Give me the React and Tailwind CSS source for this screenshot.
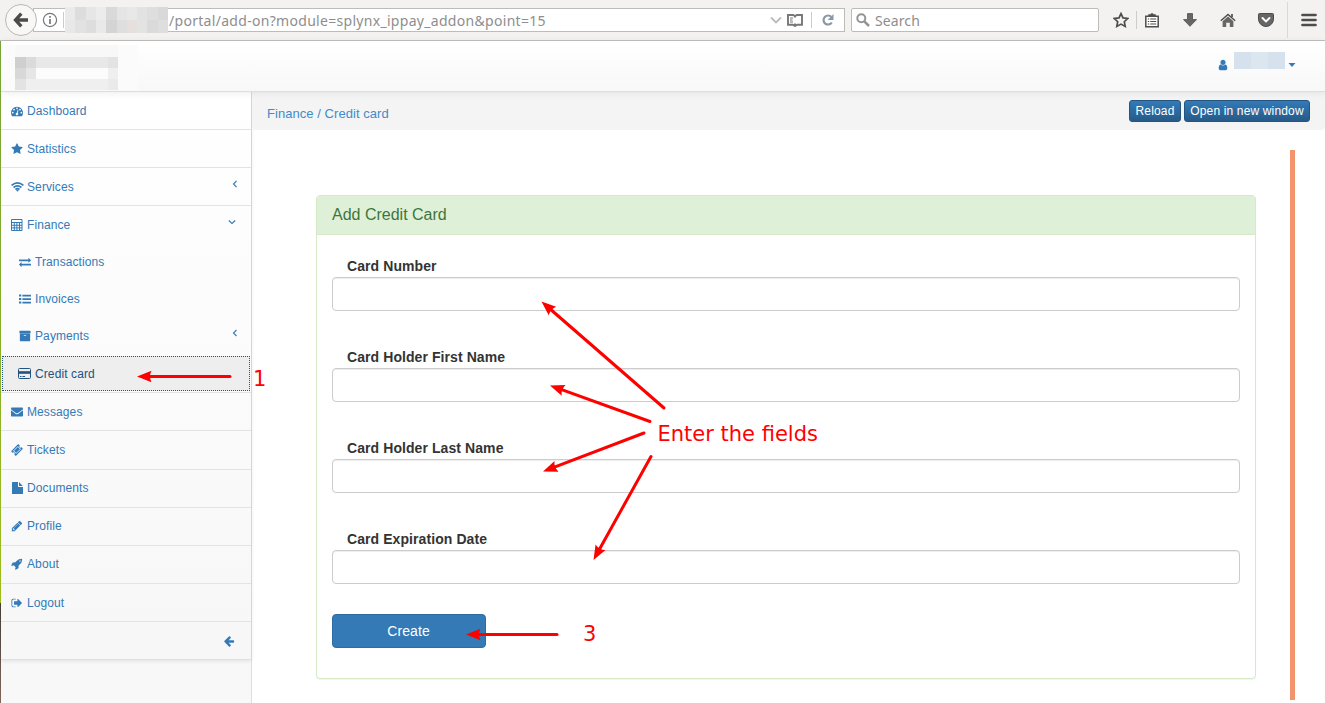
import React from "react";
import { FaEnvelope } from "react-icons/fa";

const Glyph = ({ d, className }) => (
  <svg viewBox="0 0 1792 1792" fill="currentColor" className={className}><path d={d} /></svg>
);

const STAR = "M1728 647q0 22-26 48l-363 354 86 500q1 7 1 20 0 21-10.5 35.5t-30.5 14.5q-19 0-40-12l-449-236-449 236q-22 12-40 12-21 0-31.5-14.5t-10.5-35.5q0-6 2-20l86-500-364-354q-25-27-25-48 0-37 56-46l502-73 225-455q19-41 49-41t49 41l225 455 502 73q56 9 56 46z";
const USER = "M1536 1399q0 109-62.5 187t-150.5 78h-854q-88 0-150.5-78t-62.5-187q0-85 8.5-160.5t31.5-152 58.5-131 94-89 134.5-34.5q131 128 313 128t313-128q76 0 134.5 34.5t94 89 58.5 131 31.5 152 8.5 160.5zm-256-887q0 159-112.5 271.5t-271.5 112.5-271.5-112.5-112.5-271.5 112.5-271.5 271.5-112.5 271.5 112.5 112.5 271.5z";
const EXIT = "M704 1440q0 4 1 20t.5 26.5-3 23.5-10 19.5-20.5 6.5h-320q-119 0-203.5-84.5t-84.5-203.5v-704q0-119 84.5-203.5t203.5-84.5h320q13 0 22.5 9.5t9.5 22.5q0 4 1 20t.5 26.5-3 23.5-10 19.5-20.5 6.5h-320q-66 0-113 47t-47 113v704q0 66 47 113t113 47h312l11.5 1 11.5 3 8 5.5 7 9 2 13.5zm928-544q0 26-19 45l-544 544q-19 19-45 19t-45-19-19-45v-288h-448q-26 0-45-19t-19-45v-384q0-26 19-45t45-19h448v-288q0-26 19-45t45-19 45 19l544 544q19 19 19 45z";
const SWAP = "M1792 1184v192q0 13-9.5 22.5t-22.5 9.5h-1376v192q0 13-9.5 22.5t-22.5 9.5q-12 0-24-10l-319-320q-9-9-9-22 0-14 9-23l320-320q9-9 23-9 13 0 22.5 9.5t9.5 22.5v192h1376q13 0 22.5 9.5t9.5 22.5zm0-544q0 14-9 23l-320 320q-9 9-23 9-13 0-22.5-9.5t-9.5-22.5v-192h-1376q-13 0-22.5-9.5t-9.5-22.5v-192q0-13 9.5-22.5t22.5-9.5h1376v-192q0-14 9-23t23-9q12 0 24 10l319 319q9 9 9 23z";
const GAUGE = "M384 1152q0-53-37.5-90.5t-90.5-37.5-90.5 37.5-37.5 90.5 37.5 90.5 90.5 37.5 90.5-37.5 37.5-90.5zm192-448q0-53-37.5-90.5t-90.5-37.5-90.5 37.5-37.5 90.5 37.5 90.5 90.5 37.5 90.5-37.5 37.5-90.5zm428 481l101-382q6-26-7.5-48.5t-38.5-29.5-48 6.5-30 39.5l-101 382q-60 5-107 43.5t-63 98.5q-20 77 20 146t117 89 146-20 89-117q16-60-6-117t-72-91zm660-33q0-53-37.5-90.5t-90.5-37.5-90.5 37.5-37.5 90.5 37.5 90.5 90.5 37.5 90.5-37.5 37.5-90.5zm-640-640q0-53-37.5-90.5t-90.5-37.5-90.5 37.5-37.5 90.5 37.5 90.5 90.5 37.5 90.5-37.5 37.5-90.5zm448 192q0-53-37.5-90.5t-90.5-37.5-90.5 37.5-37.5 90.5 37.5 90.5 90.5 37.5 90.5-37.5 37.5-90.5zm320 448q0 261-141 483-19 29-54 29h-1402q-35 0-54-29-141-221-141-483 0-182 71-348t191-286 286-191 348-71 348 71 286 191 191 286 71 348z";
const ARROW = "M1664 896v128q0 53-32.5 90.5t-84.5 37.5h-704l293 294q38 36 38 90t-38 90l-75 76q-37 37-90 37-52 0-91-37l-651-652q-37-37-37-90 0-52 37-91l651-650q38-38 91-38 52 0 90 38l75 74q38 38 38 91t-38 91l-293 293h704q52 0 84.5 37.5t32.5 90.5z";
const ARCHIVE = "M1088 832q0-26-19-45t-45-19h-256q-26 0-45 19t-19 45 19 45 45 19h256q26 0 45-19t19-45zm576-192v960q0 26-19 45t-45 19h-1408q-26 0-45-19t-19-45v-960q0-26 19-45t45-19h1408q26 0 45 19t19 45zm64-448v256q0 26-19 45t-45 19h-1536q-26 0-45-19t-19-45v-256q0-26 19-45t45-19h1536q26 0 45 19t19 45z";
const TICKET = "M1024 452l316 316-572 572-316-316zm-211 979l618-618q19-19 19-45t-19-45l-362-362q-18-18-45-18t-45 18l-618 618q-19 19-19 45t19 45l362 362q18 18 45 18t45-18zm889-637l-907 908q-37 37-90.5 37t-90.5-37l-126-126q56-56 56-136t-56-136-136-56-136 56l-125-126q-37-37-37-90.5t37-90.5l907-906q37-37 90.5-37t90.5 37l125 125q-56 56-56 136t56 136 136 56 136-56l126 125q37 37 37 90.5t-37 90.5z";
const PENCIL = "M491 1536l91-91-235-235-91 91v107h128v128h107zm523-928q0-22-22-22-10 0-17 7l-542 542q-7 7-7 17 0 22 22 22 10 0 17-7l542-542q7-7 7-17zm-54-192l416 416-832 832h-416v-416zm683 96q0 53-37 90l-166 166-416-416 166-165q36-38 90-38 53 0 91 38l235 234q37 39 37 91z";
const ROCKET = "M1440 448q0-40-28-68t-68-28-68 28-28 68 28 68 68 28 68-28 28-68zm224-288q0 249-75.5 430.5t-253.5 360.5q-81 80-195 176l-20 379q-2 16-16 26l-384 224q-7 4-16 4-12 0-23-9l-64-64q-13-14-8-32l85-276-281-281-276 85q-3 1-9 1-14 0-23-9l-64-64q-17-19-5-39l224-384q10-14 26-16l379-20q96-114 176-195 188-187 358-258t431-71q14 0 24 9.5t10 22.5z";

const Calculator = () => (
  <svg viewBox="0 0 12 12" className="h-3 w-3" fill="none" stroke="currentColor">
    <path d="M.5 .5h10.5v11H.5z" />
    <path d="M.5 3.5H11M.5 6.3H11M.5 8.900H11M3.300 3.500v8M5.900 3.500v8M8.500 3.500v8" />
  </svg>
);
const Wifi = () => (
  <svg viewBox="0 0 13 12" className="h-3 w-[13px]" fill="none" stroke="currentColor" strokeWidth="1.7">
    <path d="M.6 4.300Q6.500-.5 12.400 4.300M2.600 6.500Q6.500 3.200 10.400 6.500M4.500 8.500Q6.500 6.900 8.500 8.500" />
    <path d="m6.500 10.800-1.400-1.500q1.400-1 2.800 0z" fill="currentColor" stroke="none" />
  </svg>
);
const List = () => (
  <svg viewBox="0 0 12 10" className="h-2.5 w-3" fill="currentColor">
    <path d="M0 .5h2.300v2H0zM0 4h2.300v2H0zM0 7.500h2.300v2H0zM3.400 .7H12v1.700H3.400zM3.400 4.200H12v1.700H3.400zM3.400 7.700H12v1.700H3.400z" />
  </svg>
);
const Card = () => (
  <svg viewBox="0 0 13 11" className="h-[11px] w-[13px]" fill="none" stroke="currentColor">
    <rect x=".5" y=".5" width="12" height="10" rx="1" />
    <path d="M.5 4.500h12" strokeWidth="2.600" /><path d="M2 8.500h1.500M4.500 8.500h2.500" />
  </svg>
);
const Doc = () => (
  <svg viewBox="0 0 11 12" className="h-3 w-[11px]" fill="currentColor">
    <path d="M.6 0H6v4.300q0 .7.700.700H11v6.400q0 .6-.6.600H.6Q0 12 0 11.400V.6Q0 0 .6 0zM7 .1 10.800 4H7z" />
  </svg>
);

const items = [
  { label: "Dashboard", icon: <Glyph d={GAUGE} className="size-3" />, h: "h-[38px] border-b" },
  { label: "Statistics", icon: <Glyph d={STAR} className="size-3" />, h: "h-[38px] border-b" },
  { label: "Services", icon: <Wifi />, h: "h-[38px] border-b", chevron: "left" },
  { label: "Finance", icon: <Calculator />, h: "h-[38px]", chevron: "down" },
  { label: "Transactions", icon: <Glyph d={SWAP} className="size-3" />, h: "h-[37px] pb-0.5", sub: true },
  { label: "Invoices", icon: <List />, h: "h-[37px] pb-0.5", sub: true },
  { label: "Payments", icon: <Glyph d={ARCHIVE} className="size-3" />, h: "h-[37px] pb-0.5", sub: true, chevron: "left" },
  { label: "Credit card", icon: <Card />, h: "h-[38px] border-b", sub: true, active: true },
  { label: "Messages", icon: <FaEnvelope size={12} />, h: "h-[38px] border-b" },
  { label: "Tickets", icon: <Glyph d={TICKET} className="size-3" />, h: "h-[39px] border-b pb-px" },
  { label: "Documents", icon: <Doc />, h: "h-[38px] border-b pb-0.5" },
  { label: "Profile", icon: <Glyph d={PENCIL} className="size-3" />, h: "h-[38px] border-b pb-0.5" },
  { label: "About", icon: <Glyph d={ROCKET} className="size-3" />, h: "h-[38px] border-b pb-0.5" },
  { label: "Logout", icon: <Glyph d={EXIT} className="size-3" />, h: "h-[38px] border-b" },
];

const Chevron = ({ dir }) => (
  <svg viewBox="0 0 8 8" fill="none" stroke="currentColor" strokeWidth="1.100" className={dir === "left" ? "mr-3 mb-1.5 ml-auto size-2" : "mr-[15px] mb-1.5 ml-auto size-2"}>
    <path d={dir === "left" ? "M5.500 1 2.500 4l3 3" : "M.8 2.500 4 5.500l3.200-3"} />
  </svg>
);

function MenuItem({ label, icon, h, sub, active, chevron }) {
  if (active) {
    return (
      <a className={`${h} flex border-[#e1e1e1] px-px py-px text-[#23527c]`}>
        <span className="flex h-[35px] flex-1 items-center border border-dotted border-[#23527c] bg-[#eee] pl-[14px]">
          <span className="mr-1 flex w-[14px] justify-center">{icon}</span>{label}
        </span>
      </a>
    );
  }
  return (
    <a className={`${h} flex items-center border-[#e3e3e3] ${sub ? "pl-[17px]" : "pl-[9px]"}`}>
      <span className="mr-[3px] flex w-[14px] justify-center">{icon}</span>{label}
      {chevron && <Chevron dir={chevron} />}
    </a>
  );
}

function BrowserBar() {
  return (
    <div className="flex h-[41px] items-center border-b border-[#c1bfbd] bg-[#f3f2f0] font-['Noto_Sans',sans-serif] text-[14px] text-[#8e8e8e]">
      <div className="z-10 ml-[5px] flex size-8 shrink-0 items-center justify-center rounded-full border border-[#b9b7b4] bg-[#f8f7f6]">
        <svg viewBox="0 0 16 16" className="size-4" fill="none" stroke="#4a4a4a" strokeWidth="3.300"><path d="M8.300 1.600 2.500 8l5.800 6.400M3 8h12" /></svg>
      </div>
      <div className="-ml-1 flex h-6 w-[812px] items-center border border-[#bebcb9] bg-white pl-2">
        <svg viewBox="0 0 16 16" className="size-4 shrink-0" fill="none" stroke="#777"><circle cx="8" cy="8" r="6.600" strokeWidth="1.200" /><path d="M8 7v5M8 4v1.800" strokeWidth="1.700" /></svg>
        <span className="ml-[5px] h-4 w-px shrink-0 bg-[#ccc]" />
        <span className="ml-px grid h-[26px] w-[103px] shrink-0 grid-cols-10 grid-rows-2">
          {["bg-[#eaeaea]", "bg-[#dddddd]", "bg-[#e6e6e6]", "bg-[#ececec]", "bg-[#d9d9d9]", "bg-[#e5e5e5]", "bg-[#e8e8e8]", "bg-[#e2e2e2]", "bg-[#dedede]", "bg-[#d9d9d9]",
            "bg-[#e8e8e8]", "bg-[#e2e2e2]", "bg-[#dddddd]", "bg-[#e9e9e9]", "bg-[#d4d4d4]", "bg-[#dedede]", "bg-[#e5e0dd]", "bg-[#e3e3e3]", "bg-[#dadada]", "bg-[#dedede]"].map((c, i) => <i key={i} className={c} />)}
        </span>
        <span className="ml-px whitespace-nowrap tracking-[0.3px]">/portal/add-on?module=splynx_ippay_addon&amp;point=15</span>
        <svg viewBox="0 0 12 8" className="mr-[5px] ml-auto h-2 w-3" fill="none" stroke="#bbb" strokeWidth="1.800"><path d="M1 1.500 6 6.500l5-5" /></svg>
        <svg viewBox="0 0 16 13" className="h-[13px] w-4" fill="none" stroke="#777" strokeWidth="1.900"><path d="M1 1h5.300L8 2.300 9.700 1H15v9.700h-4.800L8 12l-2.200-1.300H1zM8 2v1.500M8 9.500V12" /><path d="M3 4h3M3 6h2.500M3 8h3" strokeWidth="1" /></svg>
        <span className="ml-2 h-4 w-px bg-[#ccc]" />
        <svg viewBox="0 0 14 14" className="mr-[9px] ml-[9px] size-3.5" fill="none" stroke="#8a97a8" strokeWidth="2.200"><path d="M10.400 4A4.500 4.500 0 1 0 10.800 9.500" /><path d="M12.500 1v6H6.700z" fill="#8a97a8" stroke="none" /></svg>
      </div>
      <div className="ml-[6px] flex h-6 w-[248px] items-center rounded-[2px] border border-[#bebcb9] bg-white pl-1">
        <svg viewBox="0 0 14 14" className="size-3.5" fill="none" stroke="#949494" strokeWidth="2"><circle cx="5.300" cy="5.300" r="4" /><path d="m8.300 8.300 4.700 4.700" strokeWidth="2.500" /></svg>
        <span className="ml-[5px] tracking-[0.100px]">Search</span>
      </div>
      <svg viewBox="0 0 16 16" className="ml-[14px] size-4" fill="none" stroke="#4d4d4d" strokeWidth="1.700"><path d="m8 1.600 2 4.300 4.800.6-3.500 3.200.9 4.700L8 12.100l-4.200 2.300.9-4.700L1.200 6.500 6 5.900z" /></svg>
      <span className="ml-[7px] h-[18px] w-px bg-[#ccc]" />
      <svg viewBox="0 0 14 15" className="ml-[8px] h-[15px] w-3.5" fill="none" stroke="#4d4d4d" strokeWidth="1.500"><path d="M.8 3.200h12.400v10.500H.8z" fill="#fff" /><path d="M4 3V2h1.500L7 .8 8.500 2H10v1" fill="#4d4d4d" /><path d="M2.800 6h1.400M5.200 6h6M2.800 8.500h1.400M5.200 8.500h6M2.800 11h1.400M5.200 11h6" strokeWidth="1.200" /></svg>
      <svg viewBox="0 0 14 14" className="ml-[24px] size-3.5" fill="#666" stroke="#4d4d4d" strokeWidth=".8"><path d="M4.500.6h5v6h4L7 13.300.5 6.600h4z" /></svg>
      <svg viewBox="0 0 16 14" className="ml-[23px] h-[14px] w-4" fill="#666"><path d="M2.600 8.200 8 3.600l5.400 4.600V14H9.800V9.700H6.200V14H2.600z" /><path d="M.8 7.800 8 1.400l7.200 6.400" fill="none" stroke="#4d4d4d" strokeWidth="1.400" /><path d="M11 1h2v3h-2z" /></svg>
      <svg viewBox="0 0 16 14" className="ml-[22px] h-[14px] w-4" fill="#666" stroke="#4d4d4d"><path d="M1.500.5h13q1 0 1 1V6a7.500 7.500 0 0 1-15 0V1.500q0-1 1-1z" /><path d="M4.500 5 8 8.400 11.500 5" fill="none" stroke="#fff" strokeWidth="2" strokeLinecap="round" /></svg>
      <span className="ml-[13px] h-[36px] w-px bg-[#dbd9d7]" />
      <svg viewBox="0 0 16 14" className="ml-[13px] h-3.5 w-4" stroke="#4d4d4d" strokeWidth="2.700" strokeLinecap="round"><path d="M1.500 2h13M1.500 7h13M1.500 12h13" /></svg>
    </div>
  );
}

const BTN = "flex h-[22px] items-center justify-center rounded-[3px] border border-[#245580] bg-linear-to-b from-[#337ab7] to-[#265a88] text-[12px] text-white";
const fields = ["Card Number", "Card Holder First Name", "Card Holder Last Name", "Card Expiration Date"];

const arrows = [
  [664, 408, 541.5, 301.5], [650, 421.5, 550, 385.5], [644, 433, 543, 471.5],
  [651, 456.5, 593.5, 560], [230, 376.5, 137, 376.5], [557, 634.5, 466, 634.5],
];

function Annotations() {
  return (
    <svg viewBox="0 0 1325 703" className="pointer-events-none absolute inset-0 h-[703px] w-[1325px]" fill="red">
      {arrows.map(([x1, y1, x2, y2]) => {
        const angle = (Math.atan2(y2 - y1, x2 - x1) * 180) / Math.PI;
        const len = Math.hypot(x2 - x1, y2 - y1);
        return (
          <g key={`${x1}-${y1}`} transform={`translate(${x2} ${y2}) rotate(${angle})`}>
            <path d={`M${-len} 0H-8`} stroke="red" strokeWidth="3" strokeLinecap="round" />
            <path d="M0 0-14.500-5.700Q-11.500 0-14.500 5.700z" />
          </g>
        );
      })}
      <g className="font-['DejaVu_Sans',sans-serif] text-[21px]">
        <text x="657.5" y="441" textLength="160.5">Enter the fields</text>
        <text x="253" y="386">1</text>
        <text x="583" y="641">3</text>
      </g>
    </svg>
  );
}

export default function App() {
  return (
    <div className="relative flex h-[703px] w-[1325px] overflow-hidden bg-white font-['Liberation_Sans',sans-serif] text-[12px] text-[#337ab7]">
      <div className="flex w-px shrink-0 flex-col">
        <span className="h-[603px] bg-linear-to-b from-[#76a83b] via-[#8cb52d] to-[#a5c51b]" />
        <span className="flex-1 bg-linear-to-b from-[#45413d] to-[#80655b]" />
      </div>
      <div className="flex min-w-0 flex-1 flex-col">
        <div className="-ml-px"><BrowserBar /></div>
        <header className="z-10 flex h-[51px] shrink-0 justify-between border-b border-[#dedede] bg-linear-to-b from-white to-[#f8f8f8] shadow-[0_1px_7px_rgba(0,0,0,0.08)]">
          <div className="ml-1 mt-1 flex h-[45px] w-[133px] flex-col bg-[#fbfbfb] pl-[10px]">
            <div className="h-3 w-[103px] bg-[#f8f8f8]" />
            <div className="flex h-[11px] w-[103px]"><i className="w-[11px] bg-[#cfcfcf]" /><i className="w-[10px] bg-[#dbdbdb]" /><i className="flex-1 bg-[#e8e8e8]" /><i className="w-[10px] bg-[#e3e3e3]" /></div>
            <div className="flex h-[11px] w-[103px]"><i className="w-[11px] bg-[#d8d8d8]" /><i className="w-[10px] bg-[#e6e6e6]" /><i className="flex-1 bg-[#fcfcfc]" /><i className="w-[10px] bg-[#efefef]" /></div>
            <div className="flex h-[11px] w-[103px]"><i className="w-[11px] bg-[#e3e3e3]" /><i className="flex-1 bg-[#efefef]" /><i className="w-[10px] bg-[#eaeaea]" /></div>
          </div>
          <div className="mr-[29px] flex pt-[11px]">
            <Glyph d={USER} className="mt-[7px] mr-[5px] size-3" />
            <span className="flex h-[17px] w-[51px]"><i className="flex-1 bg-[#d5e1ed]" /><i className="flex-1 bg-[#dce6ef]" /><i className="flex-1 bg-[#d5e1ed]" /></span>
            <svg viewBox="0 0 8 4" className="mt-[11px] ml-[3px] h-1 w-2" fill="currentColor"><path d="M.5 0h7L4 4z" /></svg>
          </div>
        </header>
        <div className="flex min-h-0 flex-1">
          <aside className="w-[251px] shrink-0 border-r border-[#dedede] bg-[#f8f8f8]">
            <nav className="bg-linear-to-b from-white to-[#f7f7f7] tracking-[0.100px] shadow-[0_1px_4px_rgba(0,0,0,0.10)]">
              {items.map((item) => <MenuItem key={item.label} {...item} />)}
              <div className="flex h-[38px] items-center justify-end border-b border-[#e1e1e1] pr-[16px]"><Glyph d={ARROW} className="size-3" /></div>
            </nav>
          </aside>
          <main className="flex min-w-0 flex-1 flex-col">
            <div className="flex h-[38px] shrink-0 items-center rounded-b bg-[#f4f4f4] pr-[15px] pl-[15px]">
              <span className="flex-1 pt-[5px] text-[13px] tracking-[0.050px] text-[#428bca]">Finance / Credit card</span>
              <a className={`${BTN} mr-[3px] w-[52px] tracking-[0.150px]`}>Reload</a>
              <a className={`${BTN} w-[126px] tracking-[0.150px]`}>Open in new window</a>
            </div>
            <div className="flex pt-5">
              <section className="mt-[45px] ml-16 h-[484px] w-[940px] rounded border border-[#d6e9c6] bg-white shadow-[0_1px_1px_rgba(0,0,0,0.05)]">
                <h1 className="flex h-[39px] items-center rounded-t-[3px] border-b border-[#d6e9c6] bg-[#dff0d8] pl-[15px] text-[16px] text-[#3c763d]">Add Credit Card</h1>
                <form className="px-[15px] pt-[21px]">
                  {fields.map((f) => (
                    <label key={f} className="mb-[36px] block text-[14px] leading-[20px] font-bold tracking-[0.080px] text-[#333]">
                      <span className="block h-[21px] pl-[15px]">{f}</span>
                      <input className="block h-[34px] w-full rounded border border-[#ccc] shadow-[inset_0_1px_1px_rgba(0,0,0,0.075)]" />
                    </label>
                  ))}
                  <button type="button" className="-mt-1.5 block h-[34px] w-[154px] rounded border border-[#2e6da4] bg-[#337ab7] pr-px text-[14px] tracking-[0.100px] text-white">Create</button>
                </form>
              </section>
              <div className="ml-[34px] h-[550px] w-[5px] bg-[#f2946c]" />
            </div>
          </main>
        </div>
      </div>
      <Annotations />
    </div>
  );
}
